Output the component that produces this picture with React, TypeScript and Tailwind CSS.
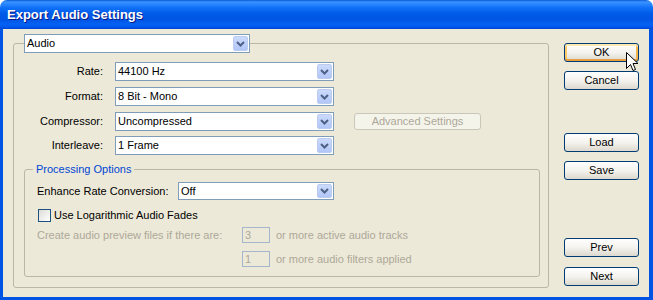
import type { ReactNode } from 'react'

const FONT = { fontFamily: '"Liberation Sans", Arial, sans-serif' }

function Chevron() {
  return (
    <svg width="9" height="6" viewBox="0 0 9 6" className="block">
      <path d="M1 1 L4.5 4.5 L8 1" fill="none" stroke="#4d6185" strokeWidth="2" />
    </svg>
  )
}

function Combo({ value, className }: { value: string; className: string }) {
  return (
    <div className={`flex border border-[#7f9db9] bg-white ${className}`}>
      <div className="flex flex-1 items-center pl-[2px] text-black">{value}</div>
      <div className="m-px flex w-[15px] items-center justify-center rounded-[2px] border border-[#bbccf1] bg-gradient-to-b from-[#cbdafc] to-[#b2c6f7]">
        <Chevron />
      </div>
    </div>
  )
}

function XPButton({ children, className = '', hot = false }: { children: ReactNode; className?: string; hot?: boolean }) {
  return (
    <button
      type="button"
      className={`flex h-[19px] w-[75px] items-center justify-center rounded-[3px] border border-[#003c74] bg-gradient-to-b from-white via-[#f4f3ee] to-[#dcd8ce] text-black ${
        hot ? 'shadow-[inset_0_2px_0_#ffe9b0,inset_0_-2px_0_#e8a040,inset_2px_0_0_#fbc96a,inset_-2px_0_0_#f6b54c]' : ''
      } ${className}`}
    >
      {children}
    </button>
  )
}

function Row({ label, value, className, children }: { label: string; value: string; className: string; children?: ReactNode }) {
  return (
    <div className={`flex items-center ${className}`}>
      <div className="w-[89px] text-right">{label}</div>
      <Combo value={value} className="ml-[12px] h-[19px] w-[219px]" />
      {children}
    </div>
  )
}

export default function App() {
  return (
    <div className="relative h-[300px] w-[653px] overflow-hidden bg-white text-[11px] leading-[13px] text-black" style={FONT}>
      <div className="flex h-[29px] items-center rounded-t-[7px] bg-[linear-gradient(to_bottom,#0a5bd6_0px,#3c94ff_2px,#2a87ff_4px,#0f6ff6_8px,#005ae8_14px,#0055e4_20px,#0462f3_24px,#0058ee_27px,#0045cf_29px)] pl-[7px]">
        <span className="text-[13px] font-bold leading-[16px] text-white [text-shadow:1px_1px_0_#0a1883]">Export Audio Settings</span>
      </div>

      <div className="flex h-[271px] border-b-[3px] border-l-[3px] border-r-[4px] border-[#0054e3] bg-[#ece9d8]">
        <fieldset className="ml-[10px] mt-[5px] h-[254px] w-[536px] shrink-0 rounded-[3px] border border-[#bab7a6]">
          <legend className="ml-[10px]">
            <Combo value="Audio" className="h-[19px] w-[226px]" />
          </legend>

          <Row label="Rate:" value="44100 Hz" className="mt-[9px]" />
          <Row label="Format:" value="8 Bit - Mono" className="mt-[6px]" />
          <Row label="Compressor:" value="Uncompressed" className="mt-[6px]">
            <div className="ml-[20px] flex h-[17px] w-[127px] items-center justify-center rounded-[3px] border border-[#c9c7ba] bg-[#f5f4ea] text-[#aca899]">
              Advanced Settings
            </div>
          </Row>
          <Row label="Interleave:" value="1 Frame" className="mt-[5px]" />

          <fieldset className="ml-[10px] mt-[7px] w-[516px] rounded-[3px] border border-[#bab7a6] pb-[9px] pl-[12px]">
            <legend className="ml-[-4px] px-[3px] leading-[14px] text-[#0046d5]">Processing Options</legend>
            <div className="mt-[6px] flex items-center">
              <div className="w-[141px]">Enhance Rate Conversion:</div>
              <Combo value="Off" className="h-[18px] w-[156px]" />
            </div>
            <div className="mt-[9px] flex items-center">
              <div className="ml-px h-[13px] w-[13px] border border-[#1c5180] bg-gradient-to-br from-[#dcdcd7] to-white" />
              <span className="ml-[3px]">Use Logarithmic Audio Fades</span>
            </div>
            <div className="mt-[5px] flex items-center text-[#aca899]">
              <div className="w-[205px]">Create audio preview files if there are:</div>
              <div className="flex h-[16px] w-[28px] items-center border border-[#a5b6cc] pl-[2px]">3</div>
              <span className="ml-[6px]">or more active audio tracks</span>
            </div>
            <div className="mt-[8px] flex items-center text-[#aca899]">
              <div className="ml-[205px] flex h-[16px] w-[28px] items-center border border-[#a5b6cc] pl-[2px]">1</div>
              <span className="ml-[6px]">or more audio filters applied</span>
            </div>
          </fieldset>
        </fieldset>

        <div className="ml-[15px] flex flex-col">
          <XPButton className="mt-[14px]" hot>OK</XPButton>
          <XPButton className="mt-[9px]">Cancel</XPButton>
          <XPButton className="mt-[43px]">Load</XPButton>
          <XPButton className="mt-[9px]">Save</XPButton>
          <XPButton className="mt-[58px]">Prev</XPButton>
          <XPButton className="mt-[10px]">Next</XPButton>
        </div>
      </div>

      <svg width="13" height="20" viewBox="0 0 13 20" className="absolute left-[626px] top-[52px]">
        <path d="M0.5 0.5 L0.5 16.5 L4.5 12.5 L7 18.5 L9.5 17.5 L7 11.5 L12 11.5 Z" fill="white" stroke="black" strokeWidth="1" />
      </svg>
    </div>
  )
}
